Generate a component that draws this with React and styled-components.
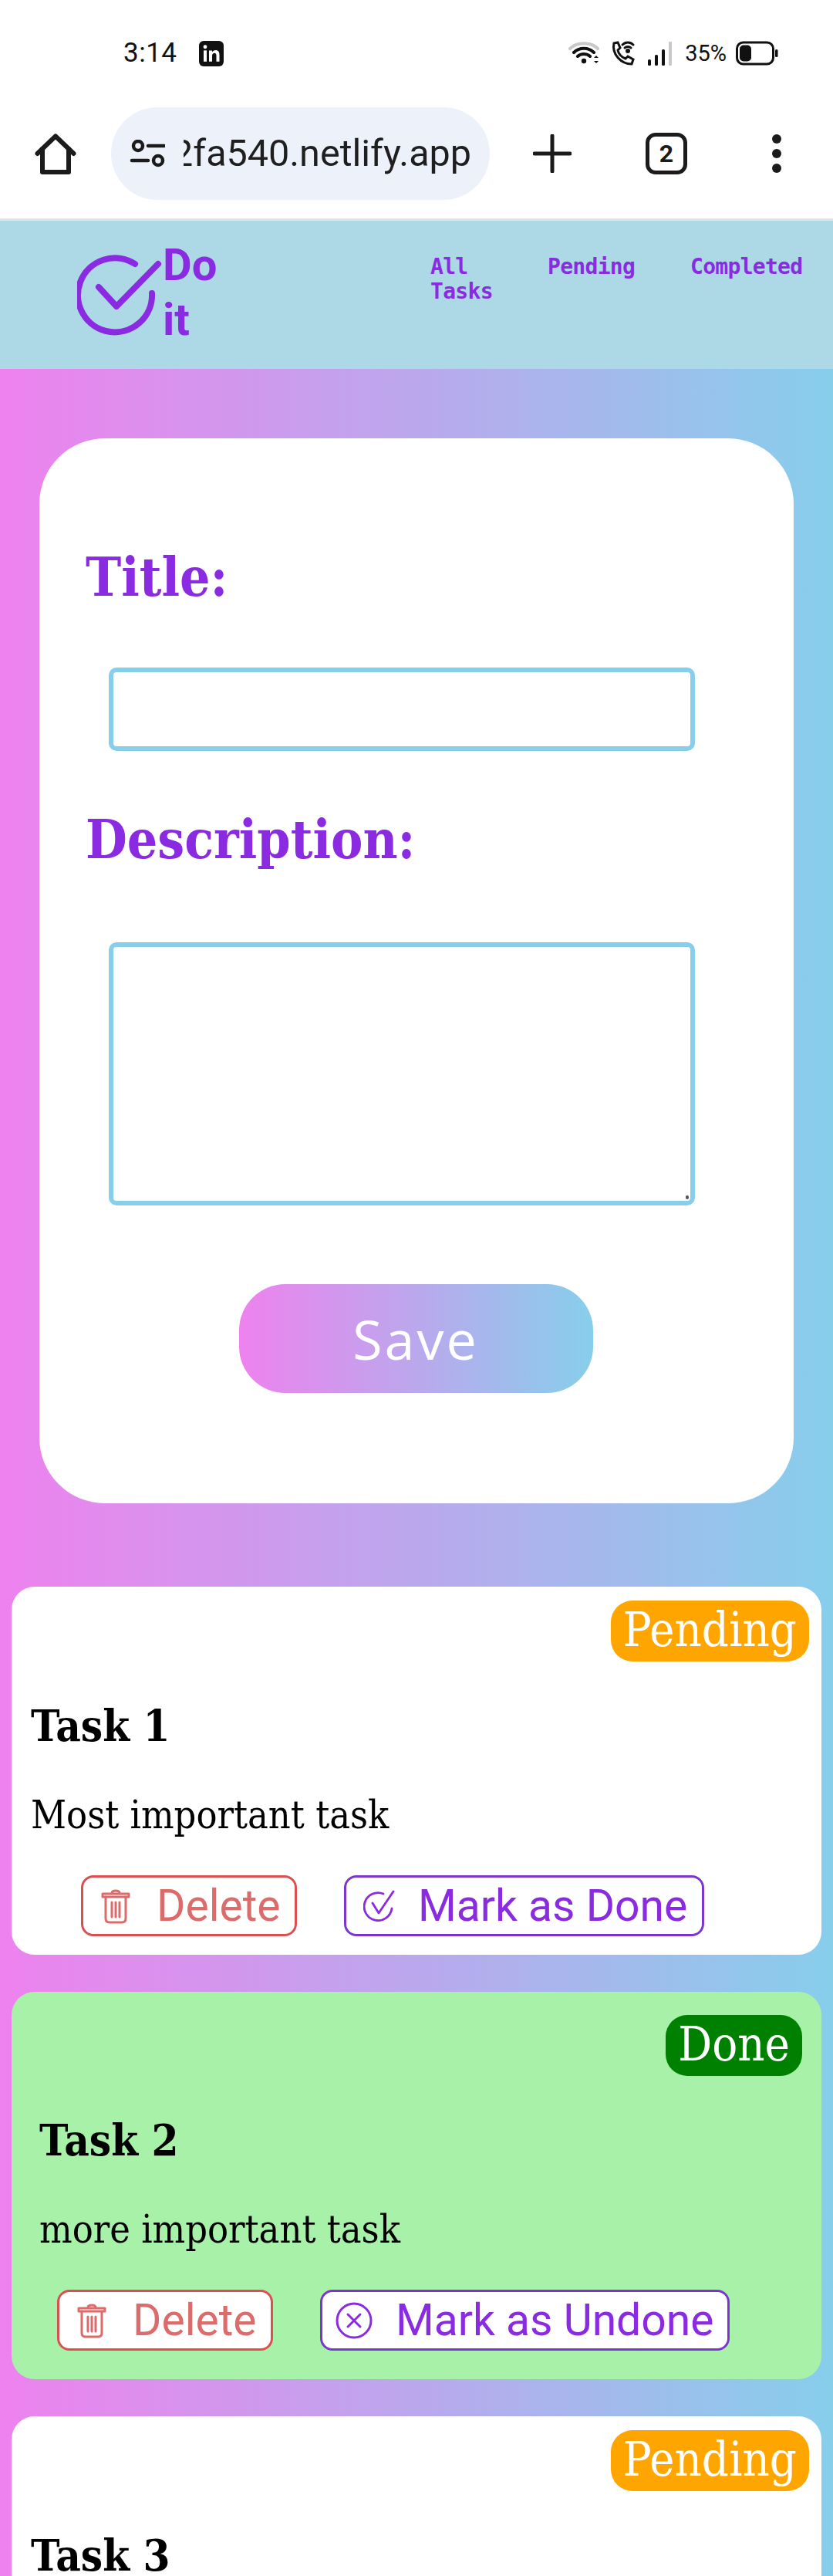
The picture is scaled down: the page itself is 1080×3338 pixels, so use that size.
import React from "react";
import styled, { createGlobalStyle } from "styled-components";

const SERIF = `"DejaVu Serif Condensed", "DejaVu Serif", serif`;
const PURPLE = "#8a2be2";

const Global = createGlobalStyle`
  html, body { margin: 0; padding: 0; background: #fff; }
  body { font-family: Roboto, sans-serif; }
  * { box-sizing: border-box; }
`;

const Page = styled.div`width: 1080px; height: 3338px; overflow: hidden;`;

const StatusBar = styled.div`
  height: 139px; padding: 50px 70px 0 160px; display: flex; align-items: flex-start; justify-content: space-between; background: #fff;
`;
const StatusLeft = styled.div`display: flex; align-items: center; gap: 28px; height: 38px;`;
const Time = styled.span`font: 400 35px/38px Roboto, sans-serif; color: #111; letter-spacing: 0.5px;`;
const StatusRight = styled.div`display: flex; align-items: center; gap: 12px; height: 38px;`;
const Percent = styled.span`font: 400 29px/38px Roboto, sans-serif; color: #111; margin-left: 1px;`;

const BrowserBar = styled.div`
  height: 147px; display: flex; align-items: flex-start; background: #fff; border-bottom: 3px solid #e3e3e3; padding-left: 44px;
`;
const HomeSlot = styled.div`width: 100px; height: 120px; display: flex; align-items: center;`;
const UrlPill = styled.div`
  width: 491px; height: 120px; border-radius: 60px; background: #edf2fa; display: flex; align-items: center; padding-left: 24px; overflow: hidden;
`;
const UrlClip = styled.div`display: flex; justify-content: flex-end; width: 373px; margin-left: 24px; overflow: hidden;`;
const UrlText = styled.span`font: 400 48.5px/1.2 Roboto, sans-serif; color: #1f1f1f; white-space: nowrap; flex: none;`;
const BarActions = styled.div`flex: 1; height: 120px; display: flex; align-items: center; padding-left: 56px;`;
const ActionSlot = styled.div`width: ${p => p.$w}px; display: flex; justify-content: flex-start;`;
const TabCount = styled.div`
  width: 54px; height: 54px; border: 5px solid #1b1b1b; border-radius: 13px; font: 700 32px/44px Roboto, sans-serif; text-align: center; color: #1b1b1b;
`;

const Header = styled.header`
  height: 192px; background: #add8e6; display: flex; align-items: flex-start; padding: 0 40px 0 100px; justify-content: space-between;
`;
const Brand = styled.div`display: flex; align-items: flex-start;`;
const LogoSvg = styled.svg`width: 113px; height: 110px; margin-top: 44px; flex: none;`;
const BrandText = styled.div`width: 90px; font: 700 58px/71px Roboto, sans-serif; color: ${PURPLE}; margin: 22px 0 0 -2px;`;
const Nav = styled.nav`display: flex; gap: 72px; padding-top: 44px;`;
const NavItem = styled.a`display: block; width: ${p => p.$w}; font: 700 28px/32px "DejaVu Sans Mono", monospace; letter-spacing: -0.7px; color: ${PURPLE};`;

const Main = styled.main`
  height: 2860px; overflow: hidden; background: linear-gradient(90deg, #ee82ee, #87ceeb); padding: 90px 15px 0;
`;
const FormCard = styled.form`
  margin: 0 36px 108px; height: 1380px; background: #fff; border-radius: 85px; padding: 140px 60px 0; display: flex; flex-direction: column;
`;
const Label = styled.label`display: block; font: 700 69px/80px ${SERIF}; color: ${PURPLE};`;
const TextInput = styled.input`
  display: block; width: 760px; height: 108px; margin: 77px 0 75px 30px; border: 6px solid #87ceeb; border-radius: 10px; background: #fff; outline: none;
`;
const AreaWrap = styled.div`position: relative; width: 760px; height: 341px; margin: 93px 0 0 30px;`;
const TextArea = styled.textarea`
  display: block; width: 100%; height: 100%; resize: none; border: 6px solid #87ceeb; border-radius: 10px; background: #fff; outline: none;
`;
const Grip = styled.span`position: absolute; right: 8px; bottom: 8px; width: 4px; height: 5px; border-radius: 2px; background: #555;`;
const SaveButton = styled.button`
  display: block; align-self: center; width: 459px; height: 141px; margin: 102px 0 0 -2px; border: 0; border-radius: 60px;
  background: linear-gradient(90deg, #ee82ee, #87ceeb); color: #fff; font: 400 70px/1 "Open Sans", sans-serif; letter-spacing: 3px;
`;

const TaskCard = styled.article`
  margin-bottom: 48px; border-radius: 30px; background: ${p => (p.$done ? "#a8f1a8" : "#fff")};
  padding: ${p => (p.$done ? "30px 25px 37px 36px" : "18px 16px 24px 25px")}; display: flex; flex-direction: column;
`;
const Badge = styled.div`
  align-self: flex-end; height: 79px; padding: 0 16px; border-radius: 28px; background: ${p => (p.$done ? "green" : "orange")}; color: #fff; font: 400 61px/76px ${SERIF};
`;
const TaskTitle = styled.h2`margin: 43px 0 0; font: 700 56px/80px ${SERIF}; color: #000;`;
const TaskText = styled.p`margin: 41px 0 0; font: 400 50px/70px ${SERIF}; color: #000;`;
const Actions = styled.div`display: flex; gap: 61px; margin: 43px 0 0 ${p => p.$indent}px;`;
const ActionButton = styled.button`
  height: 79px; width: ${p => p.$w}px; padding: 0 0 0 ${p => p.$pad}px; border: 3px solid ${p => (p.$danger ? "#dc4f4f" : "#7c36cf")}; border-radius: 16px; background: #fff; display: flex; align-items: center;
  color: ${p => (p.$danger ? "#dc6b6b" : PURPLE)}; font: 400 57px/1 Roboto, sans-serif; gap: ${p => p.$gap}px; white-space: nowrap;
`;

const Stroke = ({ w = 48, h = 48, vb = "0 0 48 48", color = "#1b1b1b", sw = 4, children, fill = "none" }) => (
  <svg width={w} height={h} viewBox={vb} fill={fill} stroke={color} strokeWidth={sw} strokeLinecap="round" strokeLinejoin="round">{children}</svg>
);

const Trash = () => (
  <Stroke w={38} h={46} vb="0 0 38 46" color="#dc6b6b" sw={3}>
    <path d="M2 7h34v4H2zM14 6c0-4 10-4 10 0" />
    <path d="M6 11v28q0 5 5 5h16q5 0 5-5V11M14 18v19M19 18v19M24 18v19" />
  </Stroke>
);

const CheckCircle = () => (
  <Stroke w={41} h={41} vb="0 0 41 41" color={PURPLE} sw={2.8}>
    <path d="M26 5A18 18 0 1 0 37 24" />
    <path d="M12 17l8 13L39 2" />
  </Stroke>
);

const CrossCircle = () => (
  <Stroke w={48} h={48} vb="0 0 48 48" color={PURPLE} sw={3}>
    <circle cx="24" cy="24" r="22" />
    <path d="M16 16l16 16M32 16L16 32" />
  </Stroke>
);

const Task = ({ title, text, done, bare }) => (
  <TaskCard $done={done}>
    <Badge $done={done}>{done ? "Done" : "Pending"}</Badge>
    <TaskTitle>{title}</TaskTitle>
    {!bare && (
      <>
        <TaskText>{text}</TaskText>
        <Actions $indent={done ? 23 : 65}>
          <ActionButton $danger $w={280} $pad={23} $gap={34}><Trash />Delete</ActionButton>
          {done ? (
            <ActionButton $w={531} $pad={17} $gap={30}><CrossCircle />Mark as Undone</ActionButton>
          ) : (
            <ActionButton $w={467} $pad={22} $gap={30}><CheckCircle />Mark as Done</ActionButton>
          )}
        </Actions>
      </>
    )}
  </TaskCard>
);

export default function App() {
  return (
    <Page>
      <Global />
      <StatusBar>
        <StatusLeft>
          <Time>3:14</Time>
          <svg width="32" height="33" viewBox="0 0 32 32" preserveAspectRatio="none">
            <rect width="32" height="32" rx="6" fill="#111" />
            <rect x="6" y="12" width="4" height="14" fill="#fff" />
            <circle cx="8" cy="7.5" r="2.4" fill="#fff" />
            <path d="M13 12h4v2c1-1.500 2.500-2.400 4.500-2.400 3.500 0 5 2.200 5 6V26h-4v-7.500c0-2-.7-3.200-2.400-3.200S17 16.600 17 18.500V26h-4z" fill="#fff" />
          </svg>
        </StatusLeft>
        <StatusRight>
          <svg width="42" height="32" viewBox="0 0 42 32" fill="none" strokeLinecap="round">
            <path d="M2 10C11 1 29 1 38 10" stroke="#c9c9c9" strokeWidth="4" />
            <path d="M7 15C14 8 26 8 33 15" stroke="#111" strokeWidth="4" />
            <path d="M12 20C16 16 24 16 28 20" stroke="#111" strokeWidth="4" />
            <circle cx="20" cy="26" r="3.200" fill="#111" />
            <path d="M33 22l3-3 3 3zM33 26l3 3 3-3z" fill="#111" />
          </svg>
          <svg width="34" height="34" viewBox="0 0 34 34" fill="none" stroke="#111" strokeWidth="3" strokeLinecap="round">
            <path d="M5 4l5-1 3 7-3 3c1 5 5 9 10 11l3-3 7 4-2 6C14 31 2 18 5 4z" />
            <path d="M16 6c4-4 10-4 14 0M19 10c2-2 6-2 8 0" />
            <circle cx="23" cy="14" r="1.500" fill="#111" />
          </svg>
          <svg width="38" height="32" viewBox="0 0 38 32">
            <rect x="3" y="24" width="4" height="8" rx="1.500" fill="#111" />
            <rect x="12" y="18" width="4" height="14" rx="1.500" fill="#111" />
            <rect x="21" y="11" width="4" height="21" rx="1.500" fill="#111" />
            <rect x="30" y="1" width="4" height="31" rx="1" fill="#c9c9c9" />
          </svg>
          <Percent>35%</Percent>
          <svg width="56" height="32" viewBox="0 0 56 32" fill="none">
            <rect x="1.500" y="2" width="47" height="28" rx="8" stroke="#111" strokeWidth="3" />
            <rect x="5" y="5.500" width="15" height="21" rx="5" fill="#111" />
            <rect x="51" y="11" width="3.500" height="10" rx="1.500" fill="#111" />
          </svg>
        </StatusRight>
      </StatusBar>

      <BrowserBar>
        <HomeSlot>
          <Stroke w={56} h={56} vb="0 0 56 56" sw={6}>
            <path d="M4.500 28L28 5.500 51.500 28" />
            <path d="M11 22v30h34V22" />
          </Stroke>
        </HomeSlot>
        <UrlPill>
          <Stroke w={46} h={36} vb="0 0 46 36" sw={4.500}>
            <circle cx="11" cy="8" r="6" />
            <path d="M24 8h21M3 27h21" />
            <circle cx="37" cy="27" r="6" />
          </Stroke>
          <UrlClip>
            <UrlText>2fa540.netlify.app</UrlText>
          </UrlClip>
        </UrlPill>
        <BarActions>
          <ActionSlot $w={146}>
            <Stroke w={50} h={50} vb="0 0 50 50" sw={5}>
              <path d="M25 2v46M2 25h46" />
            </Stroke>
          </ActionSlot>
          <ActionSlot $w={162}>
            <TabCount>2</TabCount>
          </ActionSlot>
          <ActionSlot $w={20}>
            <svg width="16" height="50" viewBox="0 0 16 50" fill="#1b1b1b">
              <circle cx="8" cy="6" r="6" />
              <circle cx="8" cy="25" r="6" />
              <circle cx="8" cy="44" r="6" />
            </svg>
          </ActionSlot>
        </BarActions>
      </BrowserBar>

      <Header>
        <Brand>
          <LogoSvg viewBox="0 0 113 110" fill="none" stroke={PURPLE} strokeWidth="8" strokeLinecap="round" strokeLinejoin="round">
            <path d="M75 12A48 48 0 1 0 97 50" />
            <path d="M28 42l23 25L105 12" />
          </LogoSvg>
          <BrandText>Do it</BrandText>
        </Brand>
        <Nav>
          <NavItem $w="80px">All Tasks</NavItem>
          <NavItem $w="113px">Pending</NavItem>
          <NavItem $w="145px">Completed</NavItem>
        </Nav>
      </Header>

      <Main>
        <FormCard>
          <Label>Title:</Label>
          <TextInput />
          <Label>Description:</Label>
          <AreaWrap>
            <TextArea />
            <Grip />
          </AreaWrap>
          <SaveButton type="button">Save</SaveButton>
        </FormCard>
        <Task title="Task 1" text="Most important task" />
        <Task title="Task 2" text="more important task" done />
        <Task title="Task 3" bare />
      </Main>
    </Page>
  );
}
